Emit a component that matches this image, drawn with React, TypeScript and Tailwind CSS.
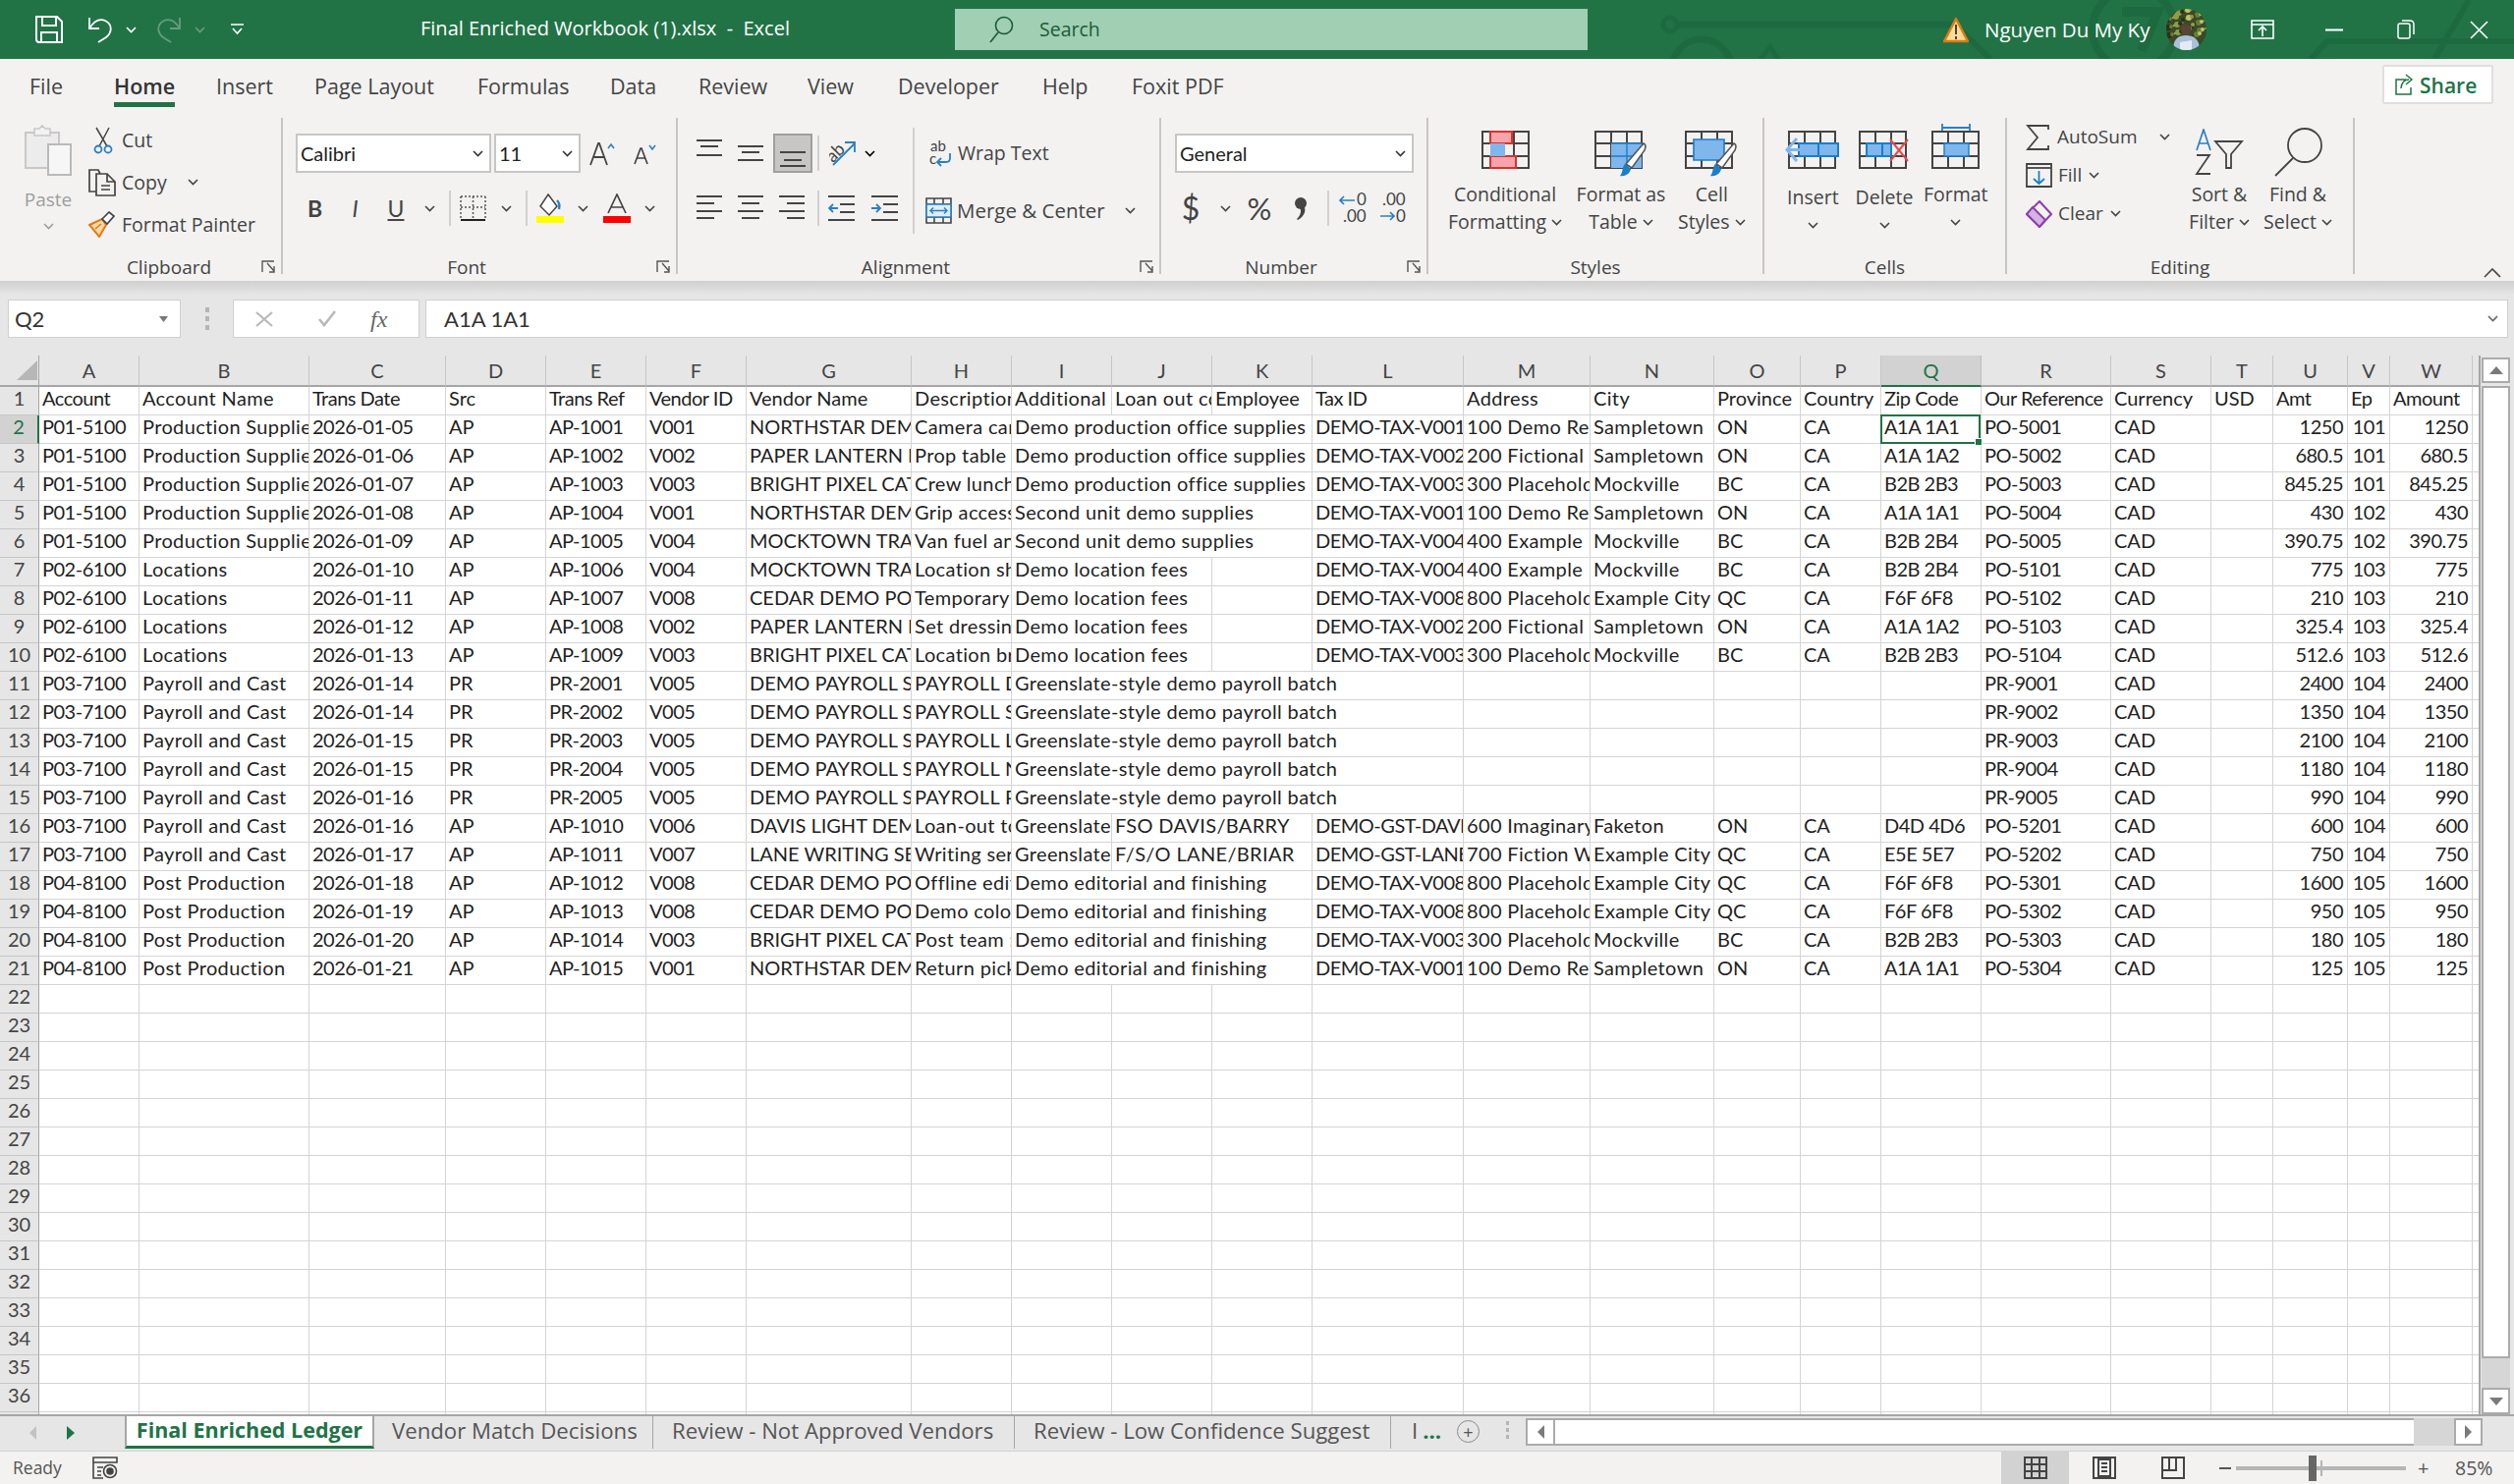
import type { ReactNode } from "react";

const COLS = [
  ["A", 102], ["B", 173], ["C", 139], ["D", 102], ["E", 102], ["F", 102], ["G", 168], ["H", 102],
  ["I", 102], ["J", 102], ["K", 102], ["L", 154], ["M", 129], ["N", 126], ["O", 88], ["P", 82],
  ["Q", 102], ["R", 132], ["S", 102], ["T", 63], ["U", 76], ["V", 43], ["W", 84], ["", 8],
] as const;

// "~" marks a cell covered by the text running over from the cell on its left
const ROWS = [
  "Account|Account Name|Trans Date|Src|Trans Ref|Vendor ID|Vendor Name|Description|Additional|Loan out corp|Employee|Tax ID|Address|City|Province|Country|Zip Code|Our Reference|Currency|USD|Amt|Ep|Amount",
  "P01-5100|Production Supplies|2026-01-05|AP|AP-1001|V001|NORTHSTAR DEMO SUPPLY|Camera cart rental|Demo production office supplies|~|~|DEMO-TAX-V001|100 Demo Rental Rd|Sampletown|ON|CA|A1A 1A1|PO-5001|CAD||1250|101|1250",
  "P01-5100|Production Supplies|2026-01-06|AP|AP-1002|V002|PAPER LANTERN PROPS|Prop table rental|Demo production office supplies|~|~|DEMO-TAX-V002|200 Fictional Road|Sampletown|ON|CA|A1A 1A2|PO-5002|CAD||680.5|101|680.5",
  "P01-5100|Production Supplies|2026-01-07|AP|AP-1003|V003|BRIGHT PIXEL CATERING|Crew lunch order|Demo production office supplies|~|~|DEMO-TAX-V003|300 Placeholder St|Mockville|BC|CA|B2B 2B3|PO-5003|CAD||845.25|101|845.25",
  "P01-5100|Production Supplies|2026-01-08|AP|AP-1004|V001|NORTHSTAR DEMO SUPPLY|Grip accessories|Second unit demo supplies|~|~|DEMO-TAX-V001|100 Demo Rental Rd|Sampletown|ON|CA|A1A 1A1|PO-5004|CAD||430|102|430",
  "P01-5100|Production Supplies|2026-01-09|AP|AP-1005|V004|MOCKTOWN TRANSPORT|Van fuel and parking|Second unit demo supplies|~|~|DEMO-TAX-V004|400 Example Lane|Mockville|BC|CA|B2B 2B4|PO-5005|CAD||390.75|102|390.75",
  "P02-6100|Locations|2026-01-10|AP|AP-1006|V004|MOCKTOWN TRANSPORT|Location shuttle|Demo location fees|~||DEMO-TAX-V004|400 Example Lane|Mockville|BC|CA|B2B 2B4|PO-5101|CAD||775|103|775",
  "P02-6100|Locations|2026-01-11|AP|AP-1007|V008|CEDAR DEMO POST|Temporary office|Demo location fees|~||DEMO-TAX-V008|800 Placeholder St|Example City|QC|CA|F6F 6F8|PO-5102|CAD||210|103|210",
  "P02-6100|Locations|2026-01-12|AP|AP-1008|V002|PAPER LANTERN PROPS|Set dressing|Demo location fees|~||DEMO-TAX-V002|200 Fictional Road|Sampletown|ON|CA|A1A 1A2|PO-5103|CAD||325.4|103|325.4",
  "P02-6100|Locations|2026-01-13|AP|AP-1009|V003|BRIGHT PIXEL CATERING|Location breakfast|Demo location fees|~||DEMO-TAX-V003|300 Placeholder St|Mockville|BC|CA|B2B 2B3|PO-5104|CAD||512.6|103|512.6",
  "P03-7100|Payroll and Cast|2026-01-14|PR|PR-2001|V005|DEMO PAYROLL SERVICES|PAYROLL DIRECTOR|Greenslate-style demo payroll batch|~|~|~||||||PR-9001|CAD||2400|104|2400",
  "P03-7100|Payroll and Cast|2026-01-14|PR|PR-2002|V005|DEMO PAYROLL SERVICES|PAYROLL STAFF|Greenslate-style demo payroll batch|~|~|~||||||PR-9002|CAD||1350|104|1350",
  "P03-7100|Payroll and Cast|2026-01-15|PR|PR-2003|V005|DEMO PAYROLL SERVICES|PAYROLL LABOUR|Greenslate-style demo payroll batch|~|~|~||||||PR-9003|CAD||2100|104|2100",
  "P03-7100|Payroll and Cast|2026-01-15|PR|PR-2004|V005|DEMO PAYROLL SERVICES|PAYROLL NIGHT|Greenslate-style demo payroll batch|~|~|~||||||PR-9004|CAD||1180|104|1180",
  "P03-7100|Payroll and Cast|2026-01-16|PR|PR-2005|V005|DEMO PAYROLL SERVICES|PAYROLL PREP|Greenslate-style demo payroll batch|~|~|~||||||PR-9005|CAD||990|104|990",
  "P03-7100|Payroll and Cast|2026-01-16|AP|AP-1010|V006|DAVIS LIGHT DEMO|Loan-out to Davis|Greenslate-style|FSO DAVIS/BARRY|~|DEMO-GST-DAVIS|600 Imaginary Way|Faketon|ON|CA|D4D 4D6|PO-5201|CAD||600|104|600",
  "P03-7100|Payroll and Cast|2026-01-17|AP|AP-1011|V007|LANE WRITING SERVICES|Writing services|Greenslate-style|F/S/O LANE/BRIAR|~|DEMO-GST-LANE|700 Fiction Walk|Example City|QC|CA|E5E 5E7|PO-5202|CAD||750|104|750",
  "P04-8100|Post Production|2026-01-18|AP|AP-1012|V008|CEDAR DEMO POST|Offline edit suite|Demo editorial and finishing|~|~|DEMO-TAX-V008|800 Placeholder St|Example City|QC|CA|F6F 6F8|PO-5301|CAD||1600|105|1600",
  "P04-8100|Post Production|2026-01-19|AP|AP-1013|V008|CEDAR DEMO POST|Demo colour pass|Demo editorial and finishing|~|~|DEMO-TAX-V008|800 Placeholder St|Example City|QC|CA|F6F 6F8|PO-5302|CAD||950|105|950",
  "P04-8100|Post Production|2026-01-20|AP|AP-1014|V003|BRIGHT PIXEL CATERING|Post team : lunch|Demo editorial and finishing|~|~|DEMO-TAX-V003|300 Placeholder St|Mockville|BC|CA|B2B 2B3|PO-5303|CAD||180|105|180",
  "P04-8100|Post Production|2026-01-21|AP|AP-1015|V001|NORTHSTAR DEMO SUPPLY|Return pickup|Demo editorial and finishing|~|~|DEMO-TAX-V001|100 Demo Rental Rd|Sampletown|ON|CA|A1A 1A1|PO-5304|CAD||125|105|125",
].map((r) => r.split("|"));

// Lato's digits and capitals run wider than the sheet font, its lower case narrower
const TIGHT = [0, 2, 4, 5, 11, 16, 17, 20, 21, 22];
const LOOSE = [1, 7, 8, 9, 12, 13];

const LEAVES = Array.from({ length: 46 }, (_, i) => ({
  x: (i * 17) % 41,
  y: (i * 11) % 28,
  r: 1 + (i % 3),
  c: ["#8f9c4c", "#26331a", "#6c7a38", "#bcc46a"][i % 4],
}));

const Chev = ({ className = "text-[#444]" }: { className?: string }) => (
  <svg width="11" height="7" viewBox="0 0 11 7" className={className}>
    <path d="M1 1l4.5 4.5L10 1" fill="none" stroke="currentColor" strokeWidth="1.6" />
  </svg>
);

const Launcher = () => (
  <svg width="15" height="14" viewBox="0 0 15 14" className="absolute right-[5px] top-[10px] text-[#555]">
    <path d="M1 12V1h12M6 3l7 8M13 6v6H8" fill="none" stroke="currentColor" strokeWidth="1.4" />
  </svg>
);

const Sep = ({ className = "h-[36px]" }: { className?: string }) => <div className={"w-[2px] bg-[#d2d0ce] " + className} />;

const Group = ({ label, launcher, className, labelClass = "", children }: { label: string; launcher?: boolean; className: string; labelClass?: string; children: ReactNode }) => (
  <div className={"flex h-[159px] shrink-0 flex-col border-r-2 border-[#c8c6c4] " + className}>
    <div className="flex h-[135px]">{children}</div>
    <div className={"relative h-[24px] pt-[5px] text-center text-[19px] leading-[24px] text-[#444] " + labelClass}>
      {label}
      {launcher && <Launcher />}
    </div>
  </div>
);

const Combo = ({ text, className }: { text: string; className: string }) => (
  <div className={"flex h-[40px] items-center justify-between border-2 border-[#c6c6c6] bg-white pl-[3px] pr-[6px] font-['Lato',sans-serif] text-[20px] text-[#222] " + className}>
    <span>{text}</span>
    <Chev className="text-[#333]" />
  </div>
);

const Slot = ({ className, children }: { className: string; children?: ReactNode }) => (
  <div className={"flex h-[40px] shrink-0 items-center justify-center " + className}>{children}</div>
);

const AlignIcon = ({ lines }: { lines: [number, number, number][] }) => (
  <svg width="26" height="34" viewBox="0 0 26 34" className="text-[#444]">
    {lines.map(([a, b, y]) => (
      <path key={y} d={`M${a} ${y}H${b}`} stroke="currentColor" strokeWidth="2" />
    ))}
  </svg>
);

const BaseGrid = ({ y = 0 }: { y?: number }) => (
  <path
    d={`M1 ${y + 1}h47v37H1zM17 ${y + 1}v37M33 ${y + 1}v37M1 ${y + 13}h47M1 ${y + 26}h47`}
    fill="none"
    stroke="#444"
    strokeWidth="2"
  />
);

const Brush = () => (
  <g>
    <path d="M50 13c3 2 2 4 1 7L38 38l-6-4z" fill="#fff" stroke="#555" strokeWidth="1.6" />
    <path d="M31 34l6 5c-1 5-6 8-11 7 3-3 2-9 5-12z" fill="#1a7fc9" />
  </g>
);

const LargeBtn = ({ icon, lines, arrow = "inline", shift = "" }: { icon: ReactNode; lines: string[]; arrow?: "inline" | "below"; shift?: string }) => (
  <div className="flex h-full flex-1 flex-col items-center text-[19.5px] leading-[28px] text-[#444]">
    <div className="flex h-[64px] items-center">{icon}</div>
    <div className={"flex flex-col items-center " + shift}>
      {lines.map((l, i) => (
        <div key={l} className="flex items-center gap-[5px] whitespace-nowrap">
          {l}
          {arrow === "inline" && i === lines.length - 1 && <Chev className="text-[#444]" />}
        </div>
      ))}
      {arrow === "below" && (
        <div className="flex h-[28px] items-center">
          <Chev className="text-[#444]" />
        </div>
      )}
    </div>
  </div>
);

const TitleBar = () => (
  <div className="relative flex h-[60px] shrink-0 items-center bg-[#217346] text-white">
    <svg width="2559" height="60" viewBox="0 0 2559 60" className="pointer-events-none absolute left-0 top-0" fill="none" stroke="#1e6a40">
      <path d="M1708 25H1990" strokeWidth="7" />
      <circle cx="1700" cy="25" r="7" strokeWidth="5" />
      <circle cx="1732" cy="70" r="30" strokeWidth="7" />
      <circle cx="2172" cy="30" r="42" strokeWidth="8" />
      <path d="M2160 12h36l-16 40" strokeWidth="10" />
      <path d="M1990 25l36 35M2352 60l17-18h190M2478 60l35-60" strokeWidth="6" />
      <path d="M1810 60l-8-12-10 12" strokeWidth="5" />
    </svg>
    <div className="relative flex h-full w-[428px] shrink-0 items-center pl-[36px]">
      <svg width="28" height="28" viewBox="0 0 28 28" fill="none" stroke="currentColor" strokeWidth="2">
        <path d="M1 1h21l5 5v21H4q-3 0-3-3zM7 1v9h14V1M6 27V17h16v10" />
      </svg>
      <svg width="27" height="28" viewBox="0 0 27 28" className="ml-[24px]" fill="none" stroke="currentColor" strokeWidth="1.8">
        <path d="M3 2v11h10M3 13C8 5 14 3 19 5c8 4 7 12 1 17l-8 5" />
      </svg>
      <Chev className="ml-[13px] text-white" />
      <svg width="27" height="28" viewBox="0 0 27 28" className="ml-[20px] -scale-x-100 opacity-30" fill="none" stroke="currentColor" strokeWidth="1.8">
        <path d="M3 2v11h10M3 13C8 5 14 3 19 5c8 4 7 12 1 17l-8 5" />
      </svg>
      <Chev className="ml-[12px] text-white opacity-30" />
      <svg width="13" height="12" viewBox="0 0 13 12" className="ml-[26px]" fill="none" stroke="currentColor" strokeWidth="1.6">
        <path d="M0 1h13M2 5l4.5 5L11 5" />
      </svg>
    </div>
    <div className="relative w-[544px] shrink-0 whitespace-pre pb-[2px] text-[20px]">Final Enriched Workbook (1).xlsx  -  Excel</div>
    <div className="relative flex h-[42px] w-[644px] shrink-0 items-center bg-[#a0cfb3] pl-[35px] text-[19.5px] text-[#1c5c38]">
      <svg width="25" height="28" viewBox="0 0 25 28" fill="none" stroke="currentColor" strokeWidth="1.6">
        <circle cx="15" cy="10" r="8.5" />
        <path d="M9 17L1 27" />
      </svg>
      <span className="ml-[26px]">Search</span>
    </div>
    <div className="relative ml-[361px] flex items-center">
      <svg width="28" height="27" viewBox="0 0 28 27">
        <path d="M14 2L26 25H2z" fill="#ffdc96" stroke="#dd7a14" strokeWidth="2.4" strokeLinejoin="round" />
        <path d="M14 8v10M14 20v3" stroke="#333" strokeWidth="1.8" />
      </svg>
      <span className="ml-[15px] w-[185px] whitespace-nowrap pt-[1px] text-[20.5px]">Nguyen Du My Ky</span>
      <svg width="41" height="42" viewBox="0 0 41 42" className="rounded-full">
        <rect width="41" height="42" fill="#3b4a26" />
        {LEAVES.map((l) => (
          <circle key={`${l.x}-${l.y}`} cx={l.x} cy={l.y} r={l.r} fill={l.c} />
        ))}
        <circle cx="20" cy="21" r="5.5" fill="#5a4337" />
        <path d="M7 42c0-12 6-15 13-15s14 3 14 15z" fill="#a9c1d8" />
        <path d="M14 34l12-2v10H14z" fill="#e4ecf3" />
      </svg>
      <svg width="24" height="20" viewBox="0 0 24 20" className="ml-[45px]" fill="none" stroke="currentColor" strokeWidth="1.6">
        <path d="M1 1h22v18H1zM1 5h22M12 17V8M8 11l4-4 4 4" />
      </svg>
      <svg width="18" height="3" viewBox="0 0 18 3" className="ml-[52px]">
        <path d="M0 1.5h18" stroke="currentColor" strokeWidth="2" />
      </svg>
      <svg width="18" height="20" viewBox="0 0 18 20" className="ml-[55px]" fill="none" stroke="currentColor" strokeWidth="1.5">
        <rect x="1" y="4" width="12" height="15" rx="2" />
        <path d="M5 1h8q4 0 4 4v10" />
      </svg>
      <svg width="19" height="19" viewBox="0 0 19 19" className="ml-[56px]" fill="none" stroke="currentColor" strokeWidth="1.6">
        <path d="M1 1l17 17M18 1L1 18" />
      </svg>
    </div>
  </div>
);

const TABS: [string, string][] = [
  ["File", "w-[86px]"], ["Home", "w-[104px]"], ["Insert", "w-[100px]"], ["Page Layout", "w-[166px]"], ["Formulas", "w-[135px]"],
  ["Data", "w-[90px]"], ["Review", "w-[111px]"], ["View", "w-[92px]"], ["Developer", "w-[147px]"], ["Help", "w-[91px]"], ["Foxit PDF", "w-[100px]"],
];

const RibbonTabs = () => (
  <div className="flex h-[58px] shrink-0 pl-[30px] text-[21.5px] text-[#444]">
    {TABS.map(([t, w]) => (
      <div key={t} className={"shrink-0 " + w}>
        <span className={"inline-block h-[49px] whitespace-nowrap pt-[8px] leading-[40px] " + (t === "Home" ? "border-b-[5px] border-[#217346] font-semibold text-[#333]" : "")}>{t}</span>
      </div>
    ))}
    <div className="ml-auto mr-[21px] mt-[6px] flex h-[40px] w-[113px] items-center rounded-[2px] border-2 border-[#e1dfdd] bg-white pl-[10px] text-[21px] font-semibold text-[#217346]">
      <svg width="20" height="22" viewBox="0 0 20 22" fill="none" stroke="currentColor" strokeWidth="1.5">
        <path d="M12 6H2v15h15v-7M7 15c0-6 4-9 8-9M12 1l6 5-6 5" />
      </svg>
      <span className="ml-[6px] pt-[3px]">Share</span>
    </div>
  </div>
);

const ClipboardGroup = () => (
  <Group label="Clipboard" launcher className="w-[288px]" labelClass="pl-[58px]">
    <div className="flex w-[90px] shrink-0 flex-col items-center pl-[8px] text-[19px] text-[#9d9d9d]">
      <svg width="48" height="52" viewBox="0 0 48 52" className="mt-[7px]" fill="none">
        <path d="M1 8h34v36H1z" fill="#ececec" stroke="#c8c8c8" strokeWidth="2" />
        <path d="M10 4h5l3-3 3 3h5v7H10z" fill="#f3f2f1" stroke="#c8c8c8" strokeWidth="1.6" />
        <path d="M24 20h23v31H24z" fill="#f6f6f6" stroke="#b9b9b9" strokeWidth="2" />
      </svg>
      <span className="mt-[10px] leading-[28px]">Paste</span>
      <Chev className="mt-[10px] text-[#9d9d9d]" />
    </div>
    <div className="flex flex-1 flex-col pt-[1px] text-[19.5px] leading-[43px] text-[#444]">
      <div className="flex h-[43px] items-center">
        <svg width="20" height="28" viewBox="0 0 20 28" className="ml-[5px]" fill="none">
          <path d="M3 1l11 19M16 1L6 20" stroke="#444" strokeWidth="1.5" />
          <circle cx="5" cy="23" r="3.5" stroke="#2b7fc2" strokeWidth="1.8" />
          <circle cx="15" cy="23" r="3.5" stroke="#2b7fc2" strokeWidth="1.8" />
        </svg>
        <span className="ml-[9px]">Cut</span>
      </div>
      <div className="flex h-[43px] items-center">
        <svg width="29" height="28" viewBox="0 0 29 28" fill="none" stroke="#444" strokeWidth="1.7">
          <path d="M8 23H1V1h9l2 4" />
          <path d="M8 5h11l8 8v14H8zM19 5v8h8M13 17h9M13 21h9" />
        </svg>
        <span className="ml-[5px]">Copy</span>
        <Chev className="ml-[21px] text-[#444]" />
      </div>
      <div className="flex h-[43px] items-center">
        <svg width="27" height="27" viewBox="0 0 27 27" fill="none">
          <path d="M1 14l13-6 4 6-7 12z" fill="#f8d9a6" stroke="#e07a14" strokeWidth="2" />
          <path d="M7 18l6-5" stroke="#e07a14" strokeWidth="1.6" />
          <path d="M14 8l7-7 5 4-7 8z" fill="#fff" stroke="#444" strokeWidth="1.7" />
        </svg>
        <span className="ml-[7px] whitespace-nowrap">Format Painter</span>
      </div>
    </div>
  </Group>
);

const FontGroup = () => (
  <Group label="Font" launcher className="w-[402px]" labelClass="pr-[26px]">
    <div className="flex flex-col pl-[13px] pt-[16px]">
      <div className="flex items-center">
        <Combo text="Calibri" className="w-[199px]" />
        <Combo text="11" className="ml-[3px] w-[88px]" />
        <svg width="27" height="26" viewBox="0 0 27 26" className="ml-[9px]">
          <path d="M1 25L9 3h1l8 22M4 17h11" fill="none" stroke="#444" strokeWidth="1.8" />
          <path d="M19 8l3-4 3 4" fill="none" stroke="#2b7fc2" strokeWidth="1.6" />
        </svg>
        <svg width="24" height="22" viewBox="0 0 24 22" className="ml-[18px] mt-[2px]">
          <path d="M1 21L7 5h1l6 16M3 15h9" fill="none" stroke="#444" strokeWidth="1.7" />
          <path d="M16 2l3 4 3-4" fill="none" stroke="#2b7fc2" strokeWidth="1.6" />
        </svg>
      </div>
      <div className="-ml-[1px] mt-[16px] flex items-center font-['Lato',sans-serif] text-[23px] text-[#444]">
        <Slot className="w-[41px] font-bold">B</Slot>
        <Slot className="w-[41px] italic">I</Slot>
        <Slot className="w-[42px] underline underline-offset-2">U</Slot>
        <Slot className="w-[26px]"><Chev /></Slot>
        <Sep className="ml-[7px] h-[36px]" />
        <Slot className="ml-[9px] w-[27px]">
          <svg width="27" height="27" viewBox="0 0 27 27" fill="none" stroke="#555" strokeWidth="1.5">
            <path d="M1 1h25M1 1v22M26 1v22M13.5 1v22M1 12h25" strokeDasharray="2 2" />
            <path d="M1 25h25" stroke="#222" strokeWidth="2" strokeDasharray="none" />
          </svg>
        </Slot>
        <Slot className="w-[40px]"><Chev /></Slot>
        <Sep className="h-[36px]" />
        <Slot className="ml-[9px] w-[28px]">
          <svg width="28" height="30" viewBox="0 0 28 30" fill="none">
            <path d="M12 1l9 12-8 9-9-9z" fill="#fff" stroke="#444" strokeWidth="1.5" />
            <path d="M21 7c2 2 3 5 2 9" stroke="#2b7fc2" strokeWidth="2.4" />
            <path d="M0 23h28v7H0z" fill="#ffff00" />
          </svg>
        </Slot>
        <Slot className="w-[38px]"><Chev /></Slot>
        <Slot className="ml-[2px] w-[28px]">
          <svg width="28" height="30" viewBox="0 0 28 30" fill="none">
            <path d="M5 20L14 1l9 19M8 14h12" stroke="#444" strokeWidth="1.7" />
            <path d="M0 23h28v7H0z" fill="#ff0000" />
          </svg>
        </Slot>
        <Slot className="w-[38px]"><Chev /></Slot>
      </div>
    </div>
  </Group>
);

const AlignmentGroup = () => (
  <Group label="Alignment" launcher className="w-[492px]" labelClass="pr-[26px]">
    <div className="flex w-[239px] shrink-0 flex-col pl-[19px] pt-[16px]">
      <div className="flex h-[40px] items-center">
        <AlignIcon lines={[[0, 26, 4], [4, 22, 10], [0, 26, 19]]} />
        <div className="ml-[16px]"><AlignIcon lines={[[0, 26, 10], [4, 22, 16], [0, 26, 24]]} /></div>
        <div className="ml-[10px] flex h-[40px] w-[40px] items-center justify-center border-2 border-[#9f9f9f] bg-[#c8c6c4]">
          <AlignIcon lines={[[0, 26, 16], [4, 22, 24], [0, 26, 30]]} />
        </div>
        <Sep className="ml-[5px] h-[36px]" />
        <svg width="28" height="30" viewBox="0 0 28 30" className="ml-[10px]">
          <text x="-3" y="19" transform="rotate(-45 8 14)" className="fill-[#444] font-['Lato',sans-serif] text-[18px]">ab</text>
          <path d="M4 27L26 5M16 4h10v10" fill="none" stroke="#2b7fc2" strokeWidth="1.8" />
        </svg>
        <Chev className="ml-[8px]" />
      </div>
      <div className="mt-[16px] flex h-[40px] items-center">
        <AlignIcon lines={[[0, 26, 5], [0, 18, 12], [0, 26, 20], [0, 18, 27]]} />
        <div className="ml-[16px]"><AlignIcon lines={[[0, 26, 5], [4, 22, 12], [0, 26, 20], [4, 22, 27]]} /></div>
        <div className="ml-[16px]"><AlignIcon lines={[[0, 26, 5], [8, 26, 12], [0, 26, 20], [8, 26, 27]]} /></div>
        <Sep className="ml-[13px] h-[36px]" />
        <svg width="27" height="26" viewBox="0 0 27 26" className="ml-[9px]" fill="none">
          <path d="M0 1h27M12 9h15M12 17h15M0 25h27" stroke="#444" strokeWidth="2" />
          <path d="M10 13H1M5 9l-4 4 4 4" stroke="#2b7fc2" strokeWidth="1.8" />
        </svg>
        <svg width="27" height="26" viewBox="0 0 27 26" className="ml-[17px]" fill="none">
          <path d="M0 1h27M12 9h15M12 17h15M0 25h27" stroke="#444" strokeWidth="2" />
          <path d="M0 13h9M5 9l4 4-4 4" stroke="#2b7fc2" strokeWidth="1.8" />
        </svg>
      </div>
    </div>
    <Sep className="mt-[10px] h-[108px]" />
    <div className="flex flex-1 flex-col pt-[8px] text-[19.5px] text-[#444]">
      <div className="flex h-[56px] items-center pl-[15px]">
        <svg width="26" height="28" viewBox="0 0 26 28">
          <text x="1" y="12" className="fill-[#444] font-['Lato',sans-serif] text-[15px]">ab</text>
          <text x="0" y="25" className="fill-[#444] font-['Lato',sans-serif] text-[15px]">c</text>
          <path d="M21 14v5q0 4-4 4H9M12 19l-4 4 4 4" fill="none" stroke="#2b7fc2" strokeWidth="1.8" />
        </svg>
        <span className="ml-[3px]">Wrap Text</span>
      </div>
      <div className="flex h-[56px] items-center pl-[11px] pt-[5px]">
        <svg width="27" height="27" viewBox="0 0 27 27" fill="none">
          <path d="M1 1h25v25H1zM1 7h25M1 20h25M9 1v6M18 1v6M9 20v6M18 20v6" stroke="#444" strokeWidth="1.6" />
          <path d="M1 7h25v13H1z" fill="#dceefb" stroke="#2b7fc2" strokeWidth="1.6" />
          <path d="M5 13.5h17M8 10.5l-3 3 3 3M19 10.5l3 3-3 3" stroke="#2b7fc2" strokeWidth="1.4" />
        </svg>
        <span className="ml-[5px] whitespace-nowrap text-[20.5px]">Merge &amp; Center</span>
        <Chev className="ml-[20px]" />
      </div>
    </div>
  </Group>
);

const NumberGroup = () => (
  <Group label="Number" launcher className="w-[272px]" labelClass="pr-[26px]">
    <div className="flex flex-col pl-[14px] pt-[16px]">
      <Combo text="General" className="w-[243px]" />
      <div className="-ml-[2px] mt-[16px] flex items-center font-['Lato',sans-serif] text-[32px] text-[#444]">
        <Slot className="w-[36px]">$</Slot>
        <Slot className="w-[34px]"><Chev /></Slot>
        <Slot className="w-[36px] text-[31px]">%</Slot>
        <Slot className="w-[48px]">
          <svg width="14" height="26" viewBox="0 0 14 26">
            <circle cx="7" cy="8" r="6" fill="#444" />
            <path d="M10 10c3 5 1 11-6 15l-1-1c4-4 5-8 3-12z" fill="#444" />
          </svg>
        </Slot>
        <Sep className="ml-[3px] h-[36px]" />
        <Slot className="ml-[9px] w-[29px]">
          <svg width="29" height="32" viewBox="0 0 29 32" fill="none">
            <text x="19" y="13" className="fill-[#444] font-['Lato',sans-serif] text-[17px]">0</text>
            <text x="5" y="30" className="fill-[#444] font-['Lato',sans-serif] text-[17px]">.00</text>
            <path d="M17 8H2M6 4L2 8l4 4" stroke="#2b7fc2" strokeWidth="1.7" />
          </svg>
        </Slot>
        <Slot className="ml-[13px] w-[27px]">
          <svg width="27" height="32" viewBox="0 0 27 32" fill="none">
            <text x="3" y="13" className="fill-[#444] font-['Lato',sans-serif] text-[17px]">.00</text>
            <text x="17" y="30" className="fill-[#444] font-['Lato',sans-serif] text-[17px]">0</text>
            <path d="M1 24h14M11 20l4 4-4 4" stroke="#2b7fc2" strokeWidth="1.7" />
          </svg>
        </Slot>
      </div>
    </div>
  </Group>
);

const StylesGroup = () => (
  <Group label="Styles" className="w-[342px]">
    <div className="flex h-full w-full pl-[18px] pr-[22px]">
      <div className="w-[120px] shrink-0">
        <LargeBtn
          lines={["Conditional", "Formatting"]}
          icon={
            <svg width="49" height="39" viewBox="0 0 49 39">
              <BaseGrid />
              <path d="M9 1h22v12H9zM9 26h26v12H9z" fill="#f7a3ab" stroke="#d9322e" strokeWidth="2" />
              <path d="M9 13h15v13H9z" fill="#7fb6ec" />
            </svg>
          }
        />
      </div>
      <div className="w-[116px] shrink-0">
        <LargeBtn
          lines={["Format as", "Table"]}
          icon={
            <svg width="54" height="47" viewBox="0 0 54 47" className="mt-[9px]">
              <BaseGrid />
              <path d="M17 13h31v25H17z" fill="#7fb6ec" />
              <path d="M17 13h31M17 26h31M33 13v25" stroke="#1a7fc9" strokeWidth="1.4" />
              <Brush />
            </svg>
          }
        />
      </div>
      <div className="flex-1">
        <LargeBtn
          lines={["Cell", "Styles"]}
          icon={
            <svg width="54" height="47" viewBox="0 0 54 47" className="mt-[9px]">
              <BaseGrid />
              <path d="M9 9h31v21H9z" fill="#7fb6ec" stroke="#1a7fc9" strokeWidth="1.6" />
              <Brush />
            </svg>
          }
        />
      </div>
    </div>
  </Group>
);

const CellsGroup = () => (
  <Group label="Cells" className="w-[247px]">
    <div className="flex h-full w-full pl-[13px] pr-[14px]">
      <LargeBtn
        arrow="below"
        shift="mt-[3px]"
        lines={["Insert"]}
        icon={
          <svg width="56" height="39" viewBox="0 0 56 39">
            <g transform="translate(3 0)"><BaseGrid /></g>
            <path d="M14 13h40v13H14z" fill="#7fb6ec" stroke="#1a7fc9" strokeWidth="2" />
            <path d="M34 13v13" stroke="#1a7fc9" strokeWidth="2" />
            <path d="M26 19.5H3M12 8L2 19.5 12 31" fill="none" stroke="#7fb6ec" strokeWidth="3" />
          </svg>
        }
      />
      <LargeBtn
        arrow="below"
        shift="mt-[3px]"
        lines={["Delete"]}
        icon={
          <svg width="52" height="39" viewBox="0 0 52 39">
            <BaseGrid />
            <path d="M8 13h25v13H8z" fill="#7fb6ec" stroke="#1a7fc9" strokeWidth="2" />
            <path d="M24 13v13" stroke="#1a7fc9" strokeWidth="2" />
            <path d="M32 9l18 22M50 9L32 31" stroke="#e8494a" strokeWidth="2" />
          </svg>
        }
      />
      <LargeBtn
        arrow="below"
        lines={["Format"]}
        icon={
          <svg width="49" height="46" viewBox="0 0 49 46" className="-mt-[6px]">
            <path d="M11 4h28M11 0v8M39 0v8" stroke="#2b7fc2" strokeWidth="1.8" fill="none" />
            <BaseGrid y={7} />
            <path d="M13 20h25v13H13z" fill="#7fb6ec" stroke="#1a7fc9" strokeWidth="1.4" />
          </svg>
        }
      />
    </div>
  </Group>
);

const EditingGroup = () => (
  <Group label="Editing" className="w-[354px]">
    <div className="flex h-full w-full">
      <div className="flex w-[172px] shrink-0 flex-col pl-[19px] text-[19px] text-[#444]">
        <div className="flex h-[39px] items-center">
          <svg width="24" height="28" viewBox="0 0 24 28" fill="none" stroke="#444" strokeWidth="1.8">
            <path d="M23 6V2H2l10 12L2 26h21v-4" />
          </svg>
          <span className="ml-[8px]">AutoSum</span>
          <Chev className="ml-[22px]" />
        </div>
        <div className="flex h-[39px] items-center">
          <svg width="27" height="25" viewBox="0 0 27 25" fill="none">
            <path d="M1 1h25v23H1z" stroke="#444" strokeWidth="1.8" />
            <path d="M1 5h25" stroke="#444" strokeWidth="1.8" />
            <path d="M13.5 8v13M8 16l5.5 5 5.5-5" stroke="#1a7fc9" strokeWidth="1.8" />
          </svg>
          <span className="ml-[6px]">Fill</span>
          <Chev className="ml-[7px]" />
        </div>
        <div className="flex h-[39px] items-center">
          <svg width="27" height="28" viewBox="0 0 27 28" fill="none" stroke="#8c3fb0" strokeWidth="2">
            <path d="M14 1l12 13-12 13L1 14z" />
            <path d="M7 7l13 13-6 7L1 14z" fill="#d4b3e4" />
          </svg>
          <span className="ml-[6px]">Clear</span>
          <Chev className="ml-[7px]" />
        </div>
      </div>
      <div className="w-[88px] shrink-0">
        <LargeBtn
          lines={["Sort &", "Filter"]}
          icon={
            <svg width="50" height="48" viewBox="0 0 50 48" className="mt-[6px]" fill="none">
              <path d="M2 22L9 1l7 21M4 15h10" stroke="#2b7fc2" strokeWidth="1.7" />
              <path d="M2 27h13L2 46h14" stroke="#444" strokeWidth="1.8" />
              <path d="M21 13h27L37 26v14h-5V26z" stroke="#444" strokeWidth="1.8" fill="#f3f2f1" />
            </svg>
          }
        />
      </div>
      <div className="w-[72px] shrink-0">
        <LargeBtn
          lines={["Find &", "Select"]}
          icon={
            <svg width="50" height="50" viewBox="0 0 50 50" className="mt-[6px]" fill="none" stroke="#444" strokeWidth="1.8">
              <ellipse cx="32" cy="18" rx="17" ry="17" />
              <path d="M20 31L2 49" />
            </svg>
          }
        />
      </div>
    </div>
  </Group>
);

const Ribbon = () => (
  <div className="flex h-[168px] shrink-0 items-start pt-[2px]">
    <ClipboardGroup />
    <FontGroup />
    <AlignmentGroup />
    <NumberGroup />
    <StylesGroup />
    <CellsGroup />
    <EditingGroup />
    <div className="flex h-[166px] flex-1 items-end justify-end pb-[3px] pr-[13px]">
      <svg width="18" height="10" viewBox="0 0 18 10" fill="none" stroke="#444" strokeWidth="1.6">
        <path d="M1 9l8-8 8 8" />
      </svg>
    </div>
  </div>
);

const FormulaBar = () => (
  <div className="shrink-0 bg-[#e6e6e6]">
    <div className="h-[14px] bg-gradient-to-b from-[#cfcfcf] to-[#e6e6e6]" />
    <div className="flex h-[62px] items-start pl-[8px] pr-[6px] pt-[5px] font-['Lato',sans-serif] text-[22px] text-[#333]">
      <div className="flex h-[39px] w-[176px] items-center justify-between border border-[#d0d0d0] bg-white pl-[6px] pr-[12px]">
        <span>Q2</span>
        <svg width="9" height="6" viewBox="0 0 9 6"><path d="M0 0h9L4.5 6z" fill="#777" /></svg>
      </div>
      <div className="flex w-[53px] flex-col items-center gap-[4px] pt-[8px]">
        <div className="h-[5px] w-[4px] bg-[#b5b5b5]" />
        <div className="h-[5px] w-[4px] bg-[#b5b5b5]" />
        <div className="h-[5px] w-[4px] bg-[#b5b5b5]" />
      </div>
      <div className="flex h-[39px] w-[190px] items-center border border-[#d0d0d0] bg-white pl-[22px]">
        <svg width="18" height="16" viewBox="0 0 18 16" fill="none" stroke="#b9b9b9" strokeWidth="2.2"><path d="M1 1l16 14M17 1L1 15" /></svg>
        <svg width="20" height="17" viewBox="0 0 20 17" className="ml-[45px]" fill="none" stroke="#b9b9b9" strokeWidth="2.6"><path d="M2 9l5 6L18 1" /></svg>
        <span className="ml-[34px] font-['Liberation_Serif',serif] text-[24px] italic text-[#666]">fx</span>
      </div>
      <div className="ml-[6px] flex h-[39px] flex-1 items-center justify-between border border-[#d0d0d0] bg-white pl-[18px] pr-[9px]">
        <span>A1A 1A1</span>
        <Chev className="text-[#666]" />
      </div>
    </div>
  </div>
);

const Grid = () => {
  const rowNums = Array.from({ length: 37 }, (_, i) => i + 1);
  return (
    <table className="w-[2525px] table-fixed border-separate border-spacing-0 font-['Lato',sans-serif] text-[20px] text-[#1f1f1f]">
      <colgroup>
        <col className="w-[40px]" />
        {COLS.map(([c, w]) => (
          <col key={c} style={{ width: w }} />
        ))}
      </colgroup>
      <thead>
        <tr className="h-[28px]">
          <th className="border-b-2 border-r border-[#a6a6a6] bg-[#e6e6e6] p-0">
            <svg width="21" height="20" viewBox="0 0 21 20" className="ml-[17px]"><path d="M21 0v20H0z" fill="#b7b7b7" /></svg>
          </th>
          {COLS.map(([c]) => (
            <th
              key={c}
              className={
                "border-b-2 border-r p-0 text-center text-[20px] font-normal " +
                (c === "Q" ? "border-b-[#217346] border-r-[#bdbdbd] bg-[#d2d2d2] text-[#217346]" : "border-b-[#a6a6a6] border-r-[#c6c6c6] bg-[#e6e6e6] text-[#444]")
              }
            >
              {c}
            </th>
          ))}
        </tr>
      </thead>
      <tbody>
        {rowNums.map((n) => {
          const row = ROWS[n - 1] ?? [];
          return (
            <tr key={n} className="h-[29px]">
              <td
                className={
                  "border-b border-[#c6c6c6] p-0 pb-[6px] text-center leading-[21px] " +
                  (n === 2 ? "border-r-2 border-r-[#217346] bg-[#d2d2d2] text-[#217346]" : "border-r border-r-[#a6a6a6] bg-[#e6e6e6] text-[#444]")
                }
              >
                {n}
              </td>
              {COLS.map(([c], i) => {
                const val = row[i] ?? "";
                if (val === "~") return null;
                let span = 1;
                while (row[i + span] === "~") span++;
                const right = n > 1 && i >= 20 && i <= 22;
                const selected = n === 2 && c === "Q";
                return (
                  <td
                    key={c}
                    colSpan={span}
                    className={
                      "whitespace-nowrap border-b border-r border-[#d4d4d4] px-[3px] pb-[6px] leading-[21px] " +
                      (TIGHT.includes(i) ? "tracking-[-0.5px] " : "") +
                      (LOOSE.includes(i) ? "tracking-[0.35px] " : "") +
                      (right ? "pr-[4px] text-right " : "") +
                      (selected ? "relative" : "overflow-hidden")
                    }
                  >
                    {val}
                    {selected && (
                      <div className="absolute -bottom-[1px] -left-[1px] -right-0 -top-[1px] border-2 border-[#217346]">
                        <div className="absolute -bottom-[4px] -right-[4px] h-[8px] w-[8px] border border-white bg-[#217346]" />
                      </div>
                    )}
                  </td>
                );
              })}
            </tr>
          );
        })}
      </tbody>
    </table>
  );
};

const ScrollArrow = ({ d, className }: { d: string; className: string }) => (
  <div className={"flex shrink-0 items-center justify-center border-2 border-[#ababab] bg-white " + className}>
    <svg width="14" height="14" viewBox="0 0 14 14"><path d={d} fill="#7a7a7a" /></svg>
  </div>
);

const Sheet = () => (
  <div className="flex h-[1078px] shrink-0 bg-[#e6e6e6]">
    <div className="h-full w-[2525px] shrink-0 overflow-hidden border-r-2 border-[#a6a6a6] bg-white">
      <Grid />
    </div>
    <div className="ml-[1px] flex h-full w-[29px] shrink-0 flex-col pt-[2px]">
      <ScrollArrow d="M7 3l7 8H0z" className="h-[26px]" />
      <div className="mt-[3px] h-[990px] shrink-0 border-2 border-[#ababab] bg-white" />
      <div className="h-[30px] shrink-0 bg-[#d6d6d6]" />
      <ScrollArrow d="M7 11L0 3h14z" className="h-[27px]" />
    </div>
  </div>
);

const SheetTabs = () => (
  <div className="flex h-[37px] shrink-0 items-start border-t-2 border-[#a6a6a6] bg-[#e6e6e6] text-[22.2px] text-[#555]">
    <div className="flex h-[33px] w-[127px] shrink-0 items-center pl-[30px]">
      <svg width="8" height="14" viewBox="0 0 8 14"><path d="M7 0v14L0 7z" fill="#c2c2c2" /></svg>
      <svg width="8" height="14" viewBox="0 0 8 14" className="ml-[30px]"><path d="M0 0v14l8-7z" fill="#217346" /></svg>
    </div>
    <div className="flex h-[33px] w-[254px] shrink-0 items-center justify-center whitespace-nowrap border-x-2 border-b-[3px] border-x-[#a6a6a6] border-b-[#217346] bg-white pb-[2px] text-[21.5px] font-bold text-[#217346]">
      Final Enriched Ledger
    </div>
    <div className="flex h-[33px] w-[284px] shrink-0 items-center whitespace-nowrap border-r border-[#a6a6a6] pb-[3px] pl-[18px]">Vendor Match Decisions</div>
    <div className="flex h-[33px] w-[368px] shrink-0 items-center overflow-hidden whitespace-nowrap border-r border-[#a6a6a6] pb-[3px] pl-[19px]">Review - Not Approved Vendors</div>
    <div className="flex h-[33px] w-[383px] shrink-0 items-center overflow-hidden whitespace-nowrap border-r border-[#a6a6a6] pb-[3px] pl-[19px]">Review - Low Confidence Suggest</div>
    <div className="flex h-[33px] w-[67px] shrink-0 items-center pb-[3px] pl-[21px] text-[#217346]">
      <span className="text-[#555]">I</span>
      <span className="ml-[5px] font-bold">...</span>
    </div>
    <div className="mt-[4px] flex h-[23px] w-[23px] shrink-0 items-center justify-center rounded-full border border-[#8a8a8a] text-[18px] leading-none">+</div>
    <div className="ml-[27px] mt-[5px] flex w-[3px] shrink-0 flex-col gap-[3px]">
      <div className="h-[4px] bg-[#b5b5b5]" />
      <div className="h-[4px] bg-[#b5b5b5]" />
      <div className="h-[4px] bg-[#b5b5b5]" />
    </div>
    <div className="ml-[17px] mt-[2px] flex h-[28px] w-[974px] shrink-0 bg-[#d6d6d6]">
      <div className="flex w-[30px] shrink-0 items-center justify-center border-2 border-[#ababab] bg-white">
        <svg width="7" height="14" viewBox="0 0 7 14"><path d="M7 0v14L0 7z" fill="#7a7a7a" /></svg>
      </div>
      <div className="w-[874px] shrink-0 border-y-2 border-[#ababab] bg-white" />
      <div className="ml-auto flex w-[29px] shrink-0 items-center justify-center border-2 border-[#ababab] bg-white">
        <svg width="7" height="14" viewBox="0 0 7 14"><path d="M0 0v14l7-7z" fill="#7a7a7a" /></svg>
      </div>
    </div>
  </div>
);

const StatusBar = () => (
  <div className="flex h-[34px] shrink-0 items-center border-t border-[#d2d2d2] text-[17.5px] text-[#555]">
    <span className="ml-[13px] w-[81px] shrink-0">Ready</span>
    <svg width="26" height="23" viewBox="0 0 26 23" fill="none" stroke="#444" strokeWidth="1.6">
      <path d="M1 1h24v5H1zM1 6v16h10M5 11h6M5 15h4M5 19h4" />
      <circle cx="18" cy="15" r="6.5" />
      <circle cx="18" cy="15" r="3" fill="#444" />
    </svg>
    <div className="ml-[1917px] flex h-full w-[69px] shrink-0 items-center justify-center bg-[#d2d2d2]">
      <svg width="24" height="23" viewBox="0 0 24 23" fill="none" stroke="#444" strokeWidth="2">
        <path d="M1 1h22v21H1zM8 1v21M16 1v21M1 8h22M1 15h22" />
      </svg>
    </div>
    <div className="flex w-[71px] shrink-0 justify-center">
      <svg width="24" height="23" viewBox="0 0 24 23" fill="none" stroke="#444" strokeWidth="2">
        <path d="M1 1h22v21H1zM6 3v17h12V3zM9 7h6M9 11h6M9 15h6" />
      </svg>
    </div>
    <div className="flex w-[69px] shrink-0 justify-center">
      <svg width="24" height="23" viewBox="0 0 24 23" fill="none" stroke="#444" strokeWidth="2">
        <path d="M1 1h22v21H1zM1 14h14V1M8 1v13" />
      </svg>
    </div>
    <div className="ml-[13px] h-[2px] w-[12px] shrink-0 bg-[#555]" />
    <div className="relative ml-[5px] h-[4px] w-[173px] shrink-0 bg-[#b5b5b5]">
      <div className="absolute left-[86px] -top-[6px] h-[16px] w-[2px] bg-[#b5b5b5]" />
      <div className="absolute left-[74px] -top-[11px] h-[26px] w-[8px] bg-[#666]" />
    </div>
    <span className="ml-[12px] w-[13px] shrink-0 text-[20px] leading-none">+</span>
    <span className="ml-[25px] shrink-0 text-[19.5px]">85%</span>
  </div>
);

export default function App() {
  return (
    <div className="flex h-[1511px] w-full flex-col overflow-hidden bg-[#f3f2f1] font-['Open_Sans',sans-serif]">
      <TitleBar />
      <RibbonTabs />
      <Ribbon />
      <FormulaBar />
      <Sheet />
      <SheetTabs />
      <StatusBar />
    </div>
  );
}
